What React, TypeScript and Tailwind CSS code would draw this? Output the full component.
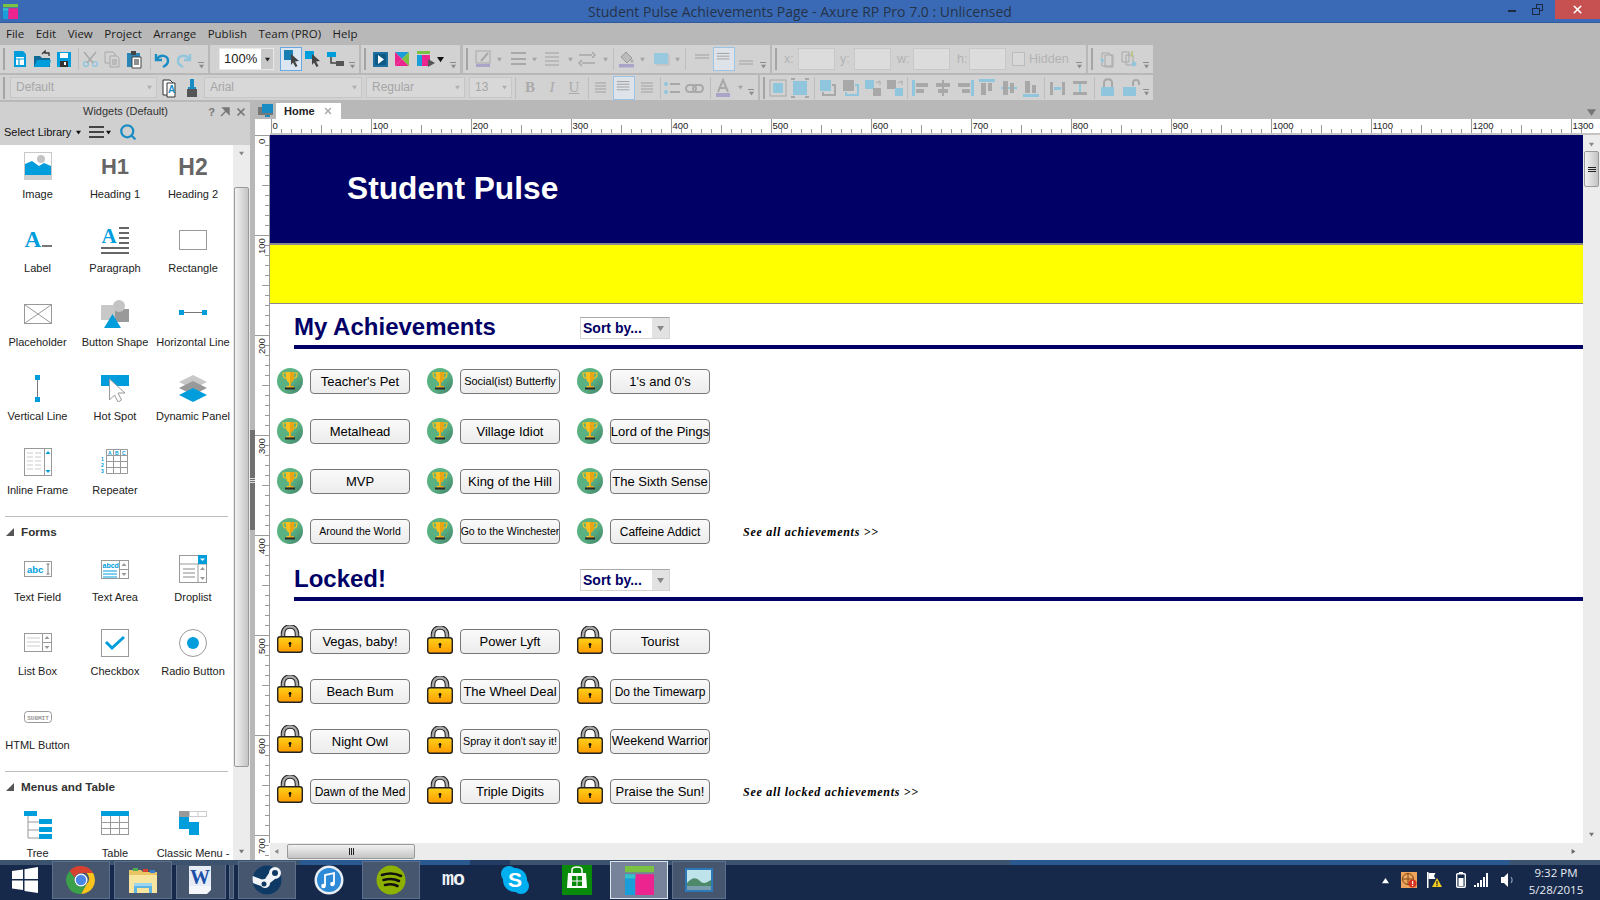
import React from 'react';
import { Search, X } from 'lucide-react';

const BLUE = '#009ddc';
const GREY = '#999999';

function Tri({ dir = 'down', size = 3, color = '#333' }: { dir?: 'down' | 'up' | 'left' | 'right'; size?: number; color?: string }) {
  const pts = {
    down: '0,1 8,1 4,7',
    up: '0,7 8,7 4,1',
    left: '7,0 7,8 1,4',
    right: '1,0 1,8 7,4',
  }[dir];
  return (
    <svg width={size * 2 + 1} height={size * 2 + 1} viewBox="0 0 8 8" className="block shrink-0">
      <polygon points={pts} fill={color} />
    </svg>
  );
}

function Ic({ children, size = 22, vb = 22, className = '' }: { children: React.ReactNode; size?: number; vb?: number; className?: string }) {
  return (
    <svg width={size} height={size} viewBox={`0 0 ${vb} ${vb}`} className={`block shrink-0 ${className}`}>
      {children}
    </svg>
  );
}

function AxureLogo({ size = 28 }: { size?: number }) {
  return (
    <Ic size={size} vb={28}>
      <rect x="0" y="0" width="28" height="6" fill="#7cc242" />
      <rect x="0" y="8" width="10" height="20" fill="#1a9ed9" />
      <rect x="10" y="8" width="18" height="20" fill="#ec2490" />
      <rect x="0" y="8" width="10" height="4" fill="#36c0c8" />
    </Ic>
  );
}

/* ---------- toolbar ---------- */

function Grip() {
  return <div className="ml-[3px] mr-[4px] h-[22px] w-[2px] shrink-0 bg-[#a4a4a4]" />;
}

function End() {
  return (
    <div className="ml-auto mr-[3px] flex w-[8px] flex-col items-center gap-[1px] self-end pb-[4px]">
      <div className="h-px w-[6px] bg-[#8c8c8c]" />
      <Tri size={2} color="#8c8c8c" />
    </div>
  );
}

function Sep({ className = '' }: { className?: string }) {
  return <div className={`h-[22px] w-px shrink-0 bg-[#bdbdbd] ${className}`} />;
}

function Car({ color = '#a4a4a4', className = '' }: { color?: string; className?: string }) {
  return (
    <div className={`flex w-[10px] shrink-0 justify-center ${className}`}>
      <Tri size={2} color={color} />
    </div>
  );
}

function Combo({ label, className = '' }: { label: string; className?: string }) {
  return (
    <div className={`mb-[1px] flex h-[21px] shrink-0 items-center justify-between border border-[#c6c6c6] bg-[#d8d8d8] pl-[5px] pr-[4px] text-[12px] text-[#a6a6a6] ${className}`}>
      <span>{label}</span>
      <Tri size={2} color="#b0b0b0" />
    </div>
  );
}

const Lines = ({ ys, x1 = 4, x2 = 18, c = '#a8a8a8' }: { ys: number[]; x1?: number; x2?: number; c?: string }) => (
  <>
    {ys.map((y) => (
      <line key={y} x1={x1} x2={x2} y1={y} y2={y} stroke={c} strokeWidth="1.2" />
    ))}
  </>
);

const Sq = ({ x, y, w, h, c }: { x: number; y: number; w: number; h: number; c: string }) => <rect x={x} y={y} width={w} height={h} fill={c} />;

const LB = '#8fc6de';
const DG = '#a8a8a8';

function ToolRow1() {
  return (
    <div className="flex h-[28px] text-[#444]">
      <div className="flex h-full w-[208px] items-center bg-[#d2d2d2]">
        <Grip />
        <Ic><path d="M5 3h9l3 3v13H5z" fill={BLUE} /><path d="M7 9h8v8H7z" fill="#fff" /><path d="M7 11h8M10 11v6" stroke={BLUE} strokeWidth="1.2" /></Ic>
        <Ic><path d="M3 8h6l2 2h8v9H3z" fill="#0f6a96" /><path d="M11 6l3-3v2h4v3" stroke="#333" strokeWidth="1.3" fill="none" /><path d="M3 19l3-7h14l-2 7z" fill={BLUE} /></Ic>
        <Ic><path d="M4 4h14v15H4z" fill={BLUE} /><rect x="7" y="5" width="8" height="5" fill="#fff" /><rect x="7" y="13" width="8" height="6" fill="#333" /><rect x="11" y="14" width="2" height="3" fill="#fff" /></Ic>
        <Sep className="ml-[3px]" />
        <Ic><circle cx="7" cy="16" r="2.4" fill="none" stroke={LB} strokeWidth="1.4" /><circle cx="16" cy="16" r="2.4" fill="none" stroke={LB} strokeWidth="1.4" /><path d="M5 4l9 11M17 4L8 15" stroke={DG} strokeWidth="1.5" /></Ic>
        <Ic><path d="M4 4h8l2 2v9H4z" fill="none" stroke={DG} /><path d="M9 8h7l2 2v9H9z" fill="#d2d2d2" stroke={DG} /><Lines ys={[12, 14, 16]} x1={11} x2={16} /></Ic>
        <Ic><path d="M4 5h13v14H4z" fill="#2c86b5" /><rect x="8" y="3" width="5" height="4" fill="#444" /><path d="M9 9h9v11H9z" fill="#fff" stroke="#444" /><Lines ys={[12, 14, 16]} x1={11} x2={16} c="#444" /></Ic>
        <Sep className="ml-[5px]" />
        <Ic><path d="M5 6v6h6" fill="none" stroke="#1a8cc4" strokeWidth="2.4" /><path d="M6 11c3-5 11-4 11 2 0 3-3 5-5 6" fill="none" stroke="#1a8cc4" strokeWidth="2.4" /></Ic>
        <Ic><path d="M17 6v6h-6" fill="none" stroke={LB} strokeWidth="2.4" /><path d="M16 11c-3-5-11-4-11 2 0 3 3 5 5 6" fill="none" stroke={LB} strokeWidth="2.4" /></Ic>
        <End />
      </div>
      <div className="ml-[2px] flex h-full w-[149px] items-center bg-[#d2d2d2]">
        <div className="ml-[9px] flex h-[22px] w-[55px] shrink-0 items-center border border-[#e8e8e8] bg-white pl-[4px] text-[13px] text-[#222]">
          <span className="flex-1">100%</span>
          <div className="flex h-full w-[12px] items-center justify-center bg-[#c8c8c8]"><Tri size={2} color="#222" /></div>
        </div>
        <div className="ml-[6px] h-[24px] w-[22px] shrink-0 border border-[#6aa9e0] bg-[#dbe6f0]">
          <Ic size={22}><rect x="3" y="2" width="9" height="10" fill="#1a7fb0" /><path d="M10 6l8 7-4 .5 2.5 4.5-2 1-2.5-4.5-2 2.5z" fill="#444" /></Ic>
        </div>
        <Ic><rect x="3" y="3" width="9" height="8" fill={BLUE} /><path d="M10 6l8 7-4 .5 2.5 4.5-2 1-2.5-4.5-2 2.5z" fill="#444" /></Ic>
        <Ic><rect x="3" y="4" width="9" height="5" fill={BLUE} /><path d="M7 9v6h6" fill="none" stroke="#444" strokeWidth="1.5" /><rect x="12" y="13" width="8" height="5" fill="#555" /></Ic>
        <End />
      </div>
      <div className="ml-[2px] flex h-full w-[99px] items-center bg-[#d2d2d2]">
        <Grip />
        <Ic className="ml-[-1px]"><rect x="4" y="4" width="15" height="15" fill="#1c6f9e" /><rect x="6" y="6" width="11" height="11" fill="#0f5a85" /><polygon points="9,7 15,11.5 9,16" fill="#fff" /></Ic>
        <Ic><polygon points="4,4 18,4 11,11" fill="#1a9ed9" /><polygon points="4,18 11,11 4,4" fill="#ec2490" /><polygon points="4,18 18,18 11,11" fill="#ec2490" /><polygon points="18,4 18,18 11,11" fill="#7cc242" /></Ic>
        <div className="ml-[2px]"><Ic><rect x="2" y="3" width="13" height="3" fill="#7cc242" /><rect x="2" y="7" width="5" height="11" fill="#1a9ed9" /><rect x="7" y="7" width="8" height="11" fill="#ec2490" /><polygon points="13,11 20,15 13,19" fill="#555" /></Ic></div>
        <Tri size={3} color="#111" />
        <End />
      </div>
      <div className="ml-[3px] flex h-full w-[307px] items-center bg-[#d2d2d2]">
        <Grip />
        <Ic><rect x="4" y="3" width="14" height="12" fill="none" stroke={DG} /><path d="M9 13l7-8" stroke={DG} strokeWidth="2" /><rect x="4" y="16" width="14" height="3" fill="#a9a5c9" /></Ic>
        <Car />
        <Ic className="ml-[3px]"><rect x="4" y="4" width="15" height="2" fill={DG} /><rect x="4" y="10" width="15" height="2" fill={DG} /><rect x="4" y="15" width="15" height="2" fill={DG} /></Ic>
        <Car />
        <Ic className="ml-[2px]"><Lines ys={[5, 9, 13, 17]} /></Ic>
        <Car className="ml-[2px]" />
        <Ic className="ml-[1px]"><path d="M3 7h13M16 4l3 3-3 3M19 15H6M6 12l-3 3 3 3" fill="none" stroke={DG} strokeWidth="1.5" /></Ic>
        <Car className="ml-[2px]" />
        <Sep className="ml-[3px]" />
        <Ic className="ml-[1px]"><path d="M6 9l5-5 6 6-5 5z" fill="#bbb" stroke="#999" /><circle cx="17" cy="13" r="1.5" fill={DG} /><rect x="4" y="16" width="15" height="3.5" fill="#a9a5c9" /></Ic>
        <Car />
        <Ic className="ml-[3px]"><rect x="4" y="5" width="14" height="11" fill="#98c9de" /><path d="M18 7h1v10H6v-1" fill="none" stroke="#bbb" /></Ic>
        <Car />
        <Sep className="ml-[3px]" />
        <Ic className="ml-[5px]"><Lines ys={[7, 10]} /></Ic>
        <div className="h-[24px] w-[22px] shrink-0 border border-[#9cc4e4] bg-[#dde3e8]"><Ic size={20}><Lines ys={[6, 9, 12]} x1={3} x2={17} /></Ic></div>
        <Ic><Lines ys={[13, 16]} /></Ic>
        <End />
      </div>
      <div className="ml-[2px] flex h-full w-[314px] items-center bg-[#d2d2d2] text-[12.5px] text-[#b2b2b2]">
        <Grip />
        <span className="ml-[3px] w-[14px]">x:</span>
        <div className="h-[22px] w-[37px] shrink-0 border border-[#c8c8c8] bg-[#dcdcdc]" />
        <span className="ml-[5px] w-[14px]">y:</span>
        <div className="h-[22px] w-[37px] shrink-0 border border-[#c8c8c8] bg-[#dcdcdc]" />
        <span className="ml-[6px] w-[16px]">w:</span>
        <div className="h-[22px] w-[37px] shrink-0 border border-[#c8c8c8] bg-[#dcdcdc]" />
        <span className="ml-[7px] w-[12px]">h:</span>
        <div className="h-[22px] w-[37px] shrink-0 border border-[#c8c8c8] bg-[#dcdcdc]" />
        <div className="ml-[6px] h-[14px] w-[13px] shrink-0 border border-[#bcbcbc] bg-[#d8d8d8]" />
        <span className="ml-[4px]">Hidden</span>
        <End />
      </div>
      <div className="ml-[2px] flex h-full w-[65px] items-center bg-[#d2d2d2]">
        <Grip />
        <Ic><path d="M5 5h7l3 3v10H5z" fill="none" stroke={DG} /><path d="M8 7h8v12H8z" fill="none" stroke={DG} /><path d="M3 10l5 2-3 3z" fill={LB} /></Ic>
        <Ic><path d="M3 4h7v10H3z" fill="none" stroke={DG} /><path d="M7 7h7v10H7z" fill="none" stroke={DG} /><path d="M13 3v6" stroke="#b8c88a" strokeWidth="2" /><polygon points="15,13 18,16 15,19 12,16" fill={LB} /></Ic>
        <End />
      </div>
    </div>
  );
}

const Big = ({ ch, className = '' }: { ch: string; className?: string }) => (
  <div className={`flex w-[22px] shrink-0 items-center justify-center text-[15px] text-[#aaaaaa] ${className}`} style={{ fontFamily: '"Liberation Serif", serif' }}>
    {ch}
  </div>
);

const AlignIcon = ({ kind }: { kind: number }) => {
  if (kind === 0)
    return <Ic><Sq x={2} y={3} w={3} h={16} c={LB} /><Sq x={6} y={6} w={12} h={4} c={DG} /><Sq x={6} y={12} w={8} h={4} c={DG} /></Ic>;
  if (kind === 1)
    return <Ic><Sq x={10} y={3} w={2} h={16} c={DG} /><Sq x={4} y={6} w={14} h={4} c={DG} /><Sq x={6} y={12} w={10} h={4} c={DG} /></Ic>;
  if (kind === 2)
    return <Ic><Sq x={17} y={3} w={3} h={16} c={LB} /><Sq x={4} y={6} w={12} h={4} c={DG} /><Sq x={8} y={12} w={8} h={4} c={DG} /></Ic>;
  if (kind === 3)
    return <Ic><Sq x={3} y={2} w={16} h={3} c={LB} /><Sq x={5} y={6} w={5} h={12} c={DG} /><Sq x={12} y={6} w={4} h={8} c={DG} /></Ic>;
  if (kind === 4)
    return <Ic><Sq x={3} y={10} w={16} h={2} c={LB} /><Sq x={5} y={4} w={5} h={14} c={DG} /><Sq x={12} y={6} w={4} h={10} c={DG} /></Ic>;
  return <Ic><Sq x={3} y={17} w={16} h={3} c={LB} /><Sq x={5} y={4} w={5} h={12} c={DG} /><Sq x={12} y={8} w={4} h={8} c={DG} /></Ic>;
};

const Lock2 = ({ open }: { open?: boolean }) => (
  <Ic>
    <path d={open ? 'M14 9V6c0-4 6-4 6 0v2' : 'M7 10V6c0-5 8-5 8 0v4'} fill="none" stroke={DG} strokeWidth="2" />
    <rect x="4" y="10" width="13" height="9" fill={LB} />
  </Ic>
);

function ToolRow2() {
  return (
    <div className="mt-[2px] flex h-[25px]">
      <div className="flex h-full w-[758px] items-center bg-[#d2d2d2]">
        <Grip />
        <Combo label="Default" className="ml-px w-[147px]" />
        <Ic className="ml-[2px]"><path d="M4 3h7l3 3v12H4z" fill="#fff" stroke="#333" /><path d="M8 6h8v14H8z" fill="#fff" stroke="#333" /><text x="9" y="16" fontSize="10" fontWeight="bold" fill="#1a8cc4" fontFamily="Liberation Sans">A</text></Ic>
        <Ic><rect x="9" y="2" width="4" height="8" fill="#1a8cc4" /><path d="M7 10h8v2H7z" fill="#1a8cc4" /><path d="M6 12h10v8H6z" fill="#555" /></Ic>
        <Combo label="Arial" className="ml-[1px] w-[158px]" />
        <Combo label="Regular" className="ml-[4px] w-[99px]" />
        <Combo label="13" className="ml-[4px] w-[43px]" />
        <Sep className="ml-[3px]" />
        <Big ch="B" className="ml-[3px] font-bold" />
        <Big ch="I" className="italic" />
        <Big ch="U" className="underline" />
        <Sep className="ml-[3px]" />
        <Ic className="ml-[2px]"><Lines ys={[6, 9, 12, 15]} x2={15} /></Ic>
        <div className="h-[24px] w-[22px] shrink-0 border border-[#9cc4e4] bg-[#dde3e8]"><Ic size={20}><Lines ys={[5, 8, 11, 14]} x1={3} x2={17} /></Ic></div>
        <Ic><Lines ys={[6, 9, 12, 15]} x1={6} /></Ic>
        <Sep className="ml-[3px]" />
        <Ic><circle cx="5" cy="7" r="2" fill={LB} /><circle cx="5" cy="15" r="2" fill={LB} /><rect x="9" y="6" width="10" height="2" fill={DG} /><rect x="9" y="14" width="10" height="2" fill={DG} /></Ic>
        <Ic className="ml-[1px]"><rect x="2" y="8" width="10" height="7" rx="3.5" fill="none" stroke={DG} strokeWidth="2" /><rect x="9" y="8" width="10" height="7" rx="3.5" fill="none" stroke={DG} strokeWidth="2" /></Ic>
        <Sep className="ml-[4px]" />
        <Ic className="ml-[1px]"><path d="M6 15L11 3l5 12M8 11h6" fill="none" stroke={DG} strokeWidth="2" /><rect x="4" y="16" width="14" height="4" fill="#a9a5c9" /></Ic>
        <Car className="ml-[1px]" />
        <End />
      </div>
      <div className="ml-[2px] flex h-full w-[393px] items-center bg-[#d2d2d2]">
        <Grip />
        <Ic className="ml-[-2px]"><rect x="3" y="3" width="16" height="16" fill="none" stroke={DG} /><rect x="6" y="6" width="10" height="10" fill="#8fc6de" /></Ic>
        <Ic><rect x="4" y="4" width="14" height="14" fill="#8fc6de" /><path d="M2 2h4M16 2h4M2 20h4M16 20h4" stroke={DG} strokeWidth="2" /></Ic>
        <Sep className="ml-[3px]" />
        <Ic className="ml-[2px]"><rect x="3" y="3" width="11" height="11" fill={LB} /><path d="M6 15v3h12V8h-3" fill="none" stroke={DG} strokeWidth="2" /></Ic>
        <Ic className="ml-px"><rect x="3" y="3" width="11" height="11" fill={DG} /><path d="M6 15v3h12V8h-3" fill="none" stroke={LB} strokeWidth="2" /></Ic>
        <Ic><rect x="3" y="3" width="9" height="9" fill={LB} /><rect x="11" y="11" width="8" height="8" fill={DG} /><path d="M14 6l4-2v4" fill="none" stroke={DG} /></Ic>
        <Ic><rect x="3" y="3" width="9" height="9" fill={DG} /><rect x="11" y="11" width="8" height="8" fill={LB} /><path d="M14 6l4-2v4" fill="none" stroke={DG} /></Ic>
        <Sep className="ml-[1px]" />
        <div className="ml-[2px]"><AlignIcon kind={0} /></div>
        <AlignIcon kind={1} />
        <AlignIcon kind={2} />
        <AlignIcon kind={3} />
        <AlignIcon kind={4} />
        <AlignIcon kind={5} />
        <Sep className="ml-[2px]" />
        <Ic className="ml-[2px]"><Sq x={3} y={5} w={3} h={13} c={DG} /><Sq x={15} y={5} w={3} h={13} c={DG} /><Sq x={7} y={10} w={7} h={3} c={LB} /></Ic>
        <Ic><Sq x={4} y={4} w={14} h={3} c={DG} /><Sq x={4} y={15} w={14} h={3} c={DG} /><Sq x={10} y={7} w={2} h={8} c={LB} /></Ic>
        <Sep className="ml-[3px]" />
        <div className="ml-[2px]"><Lock2 /></div>
        <Lock2 open />
        <End />
      </div>
    </div>
  );
}

/* ---------- widgets ---------- */

const W = ({ children }: { children: React.ReactNode }) => <Ic size={28} vb={28}>{children}</Ic>;
const G = GREY;

const widgetIcons: Record<string, React.ReactNode> = {
  Image: <W><rect x="0.5" y="0.5" width="27" height="27" fill="#fff" stroke="#c8c8c8" /><circle cx="17" cy="7" r="4" fill="#c4c4c4" /><path d="M1 12l7-3 7 5 5-3 7 3v9H1z" fill={BLUE} /><rect x="0" y="23" width="28" height="5" fill="#cfcfcf" /></W>,
  'Heading 1': <W><text x="14" y="22" textAnchor="middle" fontSize="22" fontWeight="bold" fill="#666" fontFamily="Liberation Sans">H1</text></W>,
  'Heading 2': <W><text x="14" y="23" textAnchor="middle" fontSize="23" fontWeight="bold" fill="#666" fontFamily="Liberation Sans">H2</text></W>,
  Label: <W><text x="0.5" y="21" fontSize="23" fontWeight="bold" fill={BLUE} fontFamily="Liberation Serif">A</text><rect x="18" y="19" width="10" height="2" fill="#777" /></W>,
  Paragraph: <W><text x="0.5" y="17" fontSize="21" fontWeight="bold" fill={BLUE} fontFamily="Liberation Serif">A</text><rect x="18" y="1" width="10" height="2" fill="#666" /><rect x="18" y="6" width="10" height="2" fill="#666" /><rect x="18" y="11" width="10" height="2" fill="#666" /><rect x="18" y="16" width="10" height="2" fill="#666" /><rect x="0" y="21" width="28" height="2" fill="#666" /><rect x="0" y="26" width="28" height="2" fill="#666" /></W>,
  Rectangle: <W><rect x="0.5" y="4.5" width="27" height="19" fill="#fff" stroke={G} /></W>,
  Placeholder: <W><rect x="0.5" y="4.5" width="27" height="19" fill="#fff" stroke={G} /><path d="M1 5l26 18M27 5L1 23" stroke={G} /></W>,
  'Button Shape': <W><rect x="0" y="5" width="14" height="15" fill="#c8c8c8" /><rect x="14" y="9" width="14" height="13" fill="#999" /><circle cx="18" cy="6" r="6" fill="#c4c4c4" /><polygon points="3,28 20,28 11.5,14" fill={BLUE} /></W>,
  'Horizontal Line': <W><rect x="0" y="10" width="5" height="5" fill={BLUE} /><rect x="23" y="10" width="5" height="5" fill={BLUE} /><rect x="5" y="12" width="18" height="1" fill="#777" /></W>,
  'Vertical Line': <W><rect x="11" y="1" width="5" height="5" fill={BLUE} /><rect x="11" y="23" width="5" height="5" fill={BLUE} /><rect x="13" y="6" width="1" height="17" fill="#777" /></W>,
  'Hot Spot': <W><rect x="0" y="1" width="28" height="11" fill={BLUE} /><path d="M8.5 5v21l5-5 3.5 7 3.5-2-3.5-7h7z" fill="#fff" stroke="#999" /></W>,
  'Dynamic Panel': <W><polygon points="14,1 28,8 14,15 0,8" fill="#c8c8c8" /><polygon points="14,7 28,14 14,21 0,14" fill="#999" /><polygon points="14,14 28,21 14,28 0,21" fill={BLUE} /></W>,
  'Inline Frame': <W><rect x="0.5" y="0.5" width="27" height="27" fill="#fff" stroke={G} /><rect x="20" y="1" width="1" height="26" fill={G} /><polygon points="24,3 21.5,6 26.5,6" fill={BLUE} /><polygon points="24,25 21.5,22 26.5,22" fill={BLUE} /><path d="M3 5h6M11 5h6M3 9h6M11 9h6M3 13h6M11 13h6M3 17h6M11 17h6M3 21h6M11 21h6" stroke="#ccc" /></W>,
  Repeater: <W><path d="M5.5 1.5h21v24h-21zM5.5 7.5h21M5.5 13.5h21M5.5 19.5h21M12.5 1.5v24M19.5 1.5v24" fill="none" stroke={G} /><text x="7" y="6.5" fontSize="5" fontWeight="bold" fill={BLUE} fontFamily="Liberation Sans">A</text><text x="14" y="6.5" fontSize="5" fontWeight="bold" fill={BLUE} fontFamily="Liberation Sans">B</text><text x="21" y="6.5" fontSize="5" fontWeight="bold" fill={BLUE} fontFamily="Liberation Sans">C</text><text x="0" y="13" fontSize="5" fontWeight="bold" fill={BLUE} fontFamily="Liberation Sans">1</text><text x="0" y="19" fontSize="5" fontWeight="bold" fill={BLUE} fontFamily="Liberation Sans">2</text><text x="0" y="25" fontSize="5" fontWeight="bold" fill={BLUE} fontFamily="Liberation Sans">3</text></W>,
  'Text Field': <W><rect x="0.5" y="6.5" width="27" height="15" fill="#fff" stroke={G} /><text x="3" y="18" fontSize="9.5" fontWeight="bold" fill={BLUE} fontFamily="Liberation Sans">abc</text><path d="M24 9v10M22.5 9h3M22.5 19h3" stroke="#777" /></W>,
  'Text Area': <W><rect x="0.5" y="5.5" width="27" height="18" fill="#fff" stroke={G} /><rect x="18" y="6" width="1" height="18" fill={G} /><text x="1.5" y="13" fontSize="7" fontWeight="bold" fill={BLUE} fontFamily="Liberation Sans">abcd</text><path d="M2 16h14M2 19h14M2 22h14" stroke={BLUE} /><polygon points="23,8 20.5,11 25.5,11" fill={G} /><polygon points="23,21 20.5,18 25.5,18" fill={G} /><path d="M19 14.5h8" stroke={G} /></W>,
  Droplist: <W><rect x="0.5" y="0.5" width="27" height="27" fill="#fff" stroke={G} /><path d="M1 9h26M19 9v18" stroke={G} /><rect x="19" y="0" width="9" height="9" fill={BLUE} /><polygon points="21,3.5 26,3.5 23.5,6" fill="#fff" /><path d="M4 14h12M4 18h12M4 22h12" stroke="#888" /><polygon points="23.5,12 21,15 26,15" fill={G} /><polygon points="23.5,25 21,22 26,22" fill={G} /></W>,
  'List Box': <W><rect x="0.5" y="4.5" width="27" height="18" fill="#fff" stroke={G} /><rect x="18" y="5" width="1" height="18" fill={G} /><path d="M3 9h13M3 13h13M3 17h13" stroke="#ccc" /><polygon points="23,7 20.5,10 25.5,10" fill={G} /><polygon points="23,20 20.5,17 25.5,17" fill={G} /><path d="M19 13.5h8" stroke={G} /></W>,
  Checkbox: <W><rect x="0.5" y="0.5" width="27" height="27" fill="#fff" stroke={G} /><path d="M5 13l6 6L23 8" fill="none" stroke={BLUE} strokeWidth="3" /></W>,
  'Radio Button': <W><circle cx="14" cy="14" r="13.5" fill="#fff" stroke={G} /><circle cx="14" cy="14" r="6" fill={BLUE} /></W>,
  'HTML Button': <W><rect x="0.5" y="8.5" width="27" height="11" rx="3" fill="#fff" stroke={G} /><text x="14" y="16.5" textAnchor="middle" fontSize="6" fontWeight="bold" fill="#999" fontFamily="Liberation Mono">SUBMIT</text></W>,
  Tree: <W><rect x="0" y="0" width="13" height="5" fill={BLUE} /><path d="M4 5v22h11M4 11h11M4 19h11" fill="none" stroke={G} /><rect x="15" y="8" width="13" height="5" fill={BLUE} /><rect x="15" y="16" width="13" height="5" fill={BLUE} /><rect x="15" y="23" width="13" height="5" fill={BLUE} /></W>,
  Table: <W><rect x="0.5" y="0.5" width="27" height="23" fill="#fff" stroke={G} /><rect x="0" y="0" width="28" height="5" fill={BLUE} /><path d="M1 11.5h26M1 17.5h26M9.5 5v19M18.5 5v19" stroke={G} /></W>,
  'Classic Menu -': <W><rect x="0" y="0" width="10" height="6" fill="#999" /><rect x="10.5" y="0.5" width="17" height="5" fill="#fff" stroke="#ccc" /><path d="M19 0v6" stroke="#ccc" /><rect x="0" y="6" width="10" height="12" fill={BLUE} /><rect x="10" y="11" width="10" height="13" fill={BLUE} /></W>,
};

function WidgetGrid({ names, className = '' }: { names: string[]; className?: string }) {
  return (
    <div className={`grid grid-cols-[75px_80px_76px] auto-rows-[74px] ${className}`}>
      {names.map((n) => (
        <div key={n} className="flex flex-col items-center">
          {widgetIcons[n]}
          <span className="mt-[8px] whitespace-nowrap text-[11px] leading-[13px] text-[#222]">{n}</span>
        </div>
      ))}
    </div>
  );
}

function SectionHead({ title }: { title: string }) {
  return (
    <div className="mx-[5px] flex h-[30px] items-center gap-[7px] border-t border-[#bdbdbd] pl-px">
      <svg width="8" height="8" viewBox="0 0 8 8" className="block"><polygon points="8,0 8,8 0,8" fill="#555" /></svg>
      <span className="text-[11.7px] font-bold text-[#333]">{title}</span>
    </div>
  );
}

function WidgetPanel() {
  return (
    <div className="flex w-[250px] shrink-0 flex-col">
      <div className="h-[43px] shrink-0 bg-[#d0d0d0]">
        <div className="relative flex h-[18px] items-center justify-center text-[11px] text-[#333]">
          <span className="pl-[1px]">Widgets (Default)</span>
          <div className="absolute right-[3px] top-[2px] flex items-center gap-[5px] text-[11px] font-bold text-[#777]">
            <span>?</span>
            <svg width="10" height="10" viewBox="0 0 10 10"><path d="M1 9l5-5M3 1h6v6z" fill="#777" stroke="#777" strokeWidth="1.4" /></svg>
            <X size={12} strokeWidth={3.5} color="#777" />
          </div>
        </div>
        <div className="mt-[2px] flex h-[20px] items-center pl-[4px] text-[11px] text-[#111]">
          <span>Select Library</span>
          <span className="ml-[5px]"><Tri size={2} color="#111" /></span>
          <div className="ml-[8px] flex w-[15px] flex-col gap-[3px]">
            <div className="h-[2px] bg-[#444]" />
            <div className="h-[2px] bg-[#444]" />
            <div className="h-[2px] bg-[#444]" />
          </div>
          <span className="ml-[2px]"><Tri size={2} color="#111" /></span>
          <Search size={18} strokeWidth={3} color="#1a8cc4" className="ml-[8px]" />
        </div>
      </div>
      <div className="flex min-h-0 flex-1">
        <div className="min-w-0 flex-1 overflow-hidden bg-white">
          <WidgetGrid className="h-[371px] pt-[7px]" names={['Image', 'Heading 1', 'Heading 2', 'Label', 'Paragraph', 'Rectangle', 'Placeholder', 'Button Shape', 'Horizontal Line', 'Vertical Line', 'Hot Spot', 'Dynamic Panel', 'Inline Frame', 'Repeater']} />
          <SectionHead title="Forms" />
          <WidgetGrid className="h-[225px] pt-[9px]" names={['Text Field', 'Text Area', 'Droplist', 'List Box', 'Checkbox', 'Radio Button', 'HTML Button']} />
          <SectionHead title="Menus and Table" />
          <WidgetGrid className="pt-[10px]" names={['Tree', 'Table', 'Classic Menu -']} />
        </div>
        <div className="flex w-[17px] shrink-0 flex-col items-center bg-[#ececec]">
          <div className="flex h-[11px] items-end"><Tri size={2} color="#888" /></div>
          <div className="mt-[31px] h-[580px] w-[15px] rounded-[2px] border border-[#999] bg-gradient-to-r from-[#f2f2f2] to-[#c4c4c4]" />
          <div className="mt-auto pb-[6px]"><Tri size={2} color="#777" /></div>
        </div>
      </div>
    </div>
  );
}

function Splitter() {
  return (
    <div className="flex w-[5px] shrink-0 flex-col bg-[#b8b8b8]">
      <div className="h-[328px] shrink-0" />
      <div className="flex h-[100px] shrink-0 flex-col items-center justify-center gap-[1px] bg-[#707070]">
        <div className="h-px w-full bg-[#ddd]" />
        <div className="h-px w-full bg-[#ddd]" />
        <div className="h-px w-full bg-[#ddd]" />
      </div>
    </div>
  );
}

/* ---------- rulers ---------- */

function HRuler() {
  const ticks = [];
  for (let i = 0; i <= 1310; i += 10) {
    const x = i + 1.5;
    const top = i % 100 === 0 ? 0 : i % 50 === 0 ? 6 : 10;
    ticks.push(<line key={i} x1={x} x2={x} y1={top} y2={14} stroke="#9a9a9a" />);
  }
  const labels = [];
  for (let i = 0; i <= 1300; i += 100) {
    labels.push(
      <text key={i} x={i + 2.5} y={10} fontSize="9.5" fill="#222" fontFamily="Liberation Sans">{i}</text>
    );
  }
  return (
    <svg width="1330" height="16" className="block">
      <rect width="1330" height="14" fill="#fff" />
      {ticks}
      {labels}
      <rect y="14" width="1330" height="2" fill="#c4c4c4" />
    </svg>
  );
}

function VRuler() {
  const ticks = [];
  for (let i = 0; i <= 720; i += 10) {
    const y = i + 0.5;
    const left = i % 100 === 0 ? 0 : i % 50 === 0 ? 7 : 10;
    ticks.push(<line key={i} x1={left} x2={14} y1={y} y2={y} stroke="#9a9a9a" />);
  }
  const labels = [];
  for (let i = 0; i <= 700; i += 100) {
    labels.push(
      <text key={i} transform={`translate(10 ${i + 4 + String(i).length * 5}) rotate(-90)`} fontSize="9.5" fill="#222" fontFamily="Liberation Sans">{i}</text>
    );
  }
  return (
    <svg width="15" height="725" className="block shrink-0">
      <rect width="15" height="725" fill="#fff" />
      {ticks}
      {labels}
      <rect x="14" width="1" height="708" fill="#999" />
    </svg>
  );
}

/* ---------- page on the canvas ---------- */

function Trophy() {
  return (
    <svg width="26" height="26" viewBox="0 0 26 26" className="block shrink-0">
      <defs>
        <linearGradient id="tr" x1="0" y1="0" x2="1" y2="1">
          <stop offset="0.55" stopColor="#5ab283" />
          <stop offset="1" stopColor="#3f7d68" />
        </linearGradient>
      </defs>
      <circle cx="13" cy="13" r="13" fill="url(#tr)" />
      <path d="M6 5h3.500v5H8.500C7 10 6 8 6 5zM20 5h-3.500v5h1C19 10 20 8 20 5z" fill="none" stroke="#f8c31c" strokeWidth="1.2" />
      <path d="M9 4h8v5c0 3.500-2 5-3 5.500V18h2.500v1.500h-7V18H12v-3.500C11 14 9 12.500 9 9z" fill="#fbc01d" />
      <path d="M13 4h4v5c0 3.500-2 5-3 5.500V18h2.500v1.500H13z" fill="#e9a414" />
      <rect x="8" y="19.500" width="10" height="2" fill="#2b2b2b" />
    </svg>
  );
}

function Padlock({ tall }: { tall?: boolean }) {
  return (
    <svg width="26" height="28" viewBox="0 0 26 28" className={`block shrink-0 ${tall ? '-translate-y-[1px]' : ''}`}>
      <defs>
        <linearGradient id="lk" x1="0" y1="0" x2="0" y2="1">
          <stop offset="0" stopColor="#ffd21a" />
          <stop offset="1" stopColor="#fd9a00" />
        </linearGradient>
      </defs>
      <path d="M6 13V9c0-10 14-10 14 0v4" fill="none" stroke="#222" strokeWidth="4.600" />
      <path d="M6 13V9c0-10 14-10 14 0v4" fill="none" stroke="#a8a8a8" strokeWidth="2.600" />
      <rect x="0.700" y="11.700" width="24.600" height="15.600" rx="2.500" fill="url(#lk)" stroke="#222" strokeWidth="1.400" />
      <circle cx="13" cy="18.500" r="1.400" fill="#111" />
      <rect x="12.300" y="19" width="1.400" height="3" fill="#111" />
    </svg>
  );
}

type Item = { t: string; c: string };

function Pill({ t, c }: Item) {
  return (
    <div className={`flex h-[25px] w-[100px] shrink-0 items-center justify-center overflow-hidden whitespace-nowrap rounded-[4px] border border-[#777] bg-gradient-to-b from-[#fafafa] to-[#ececec] text-black ${c}`}>
      {t}
    </div>
  );
}

function AchRow({ items, icon, link }: { items: Item[]; icon: (i: number) => React.ReactNode; link?: string }) {
  return (
    <div className="flex h-[50px] pl-[7px] pt-[4px]">
      {items.map((it, i) => (
        <div key={it.t} className="flex h-[25px] w-[150px] shrink-0 gap-[7px]">
          <div className="flex h-[25px] w-[26px] shrink-0 items-end justify-center">{icon(i)}</div>
          <Pill {...it} />
        </div>
      ))}
      {link && (
        <div className="ml-[16px] pt-[4px] text-[12px] font-bold italic tracking-[0.72px] text-black" style={{ fontFamily: '"Liberation Serif", serif' }}>
          {link}
        </div>
      )}
    </div>
  );
}

function SectionTop({ title }: { title: string }) {
  return (
    <div className="ml-[24px] border-b-[4px] border-[#000066] pb-[6px]">
      <div className="flex h-[22px] items-center">
        <h2 className="w-[286px] shrink-0 pb-[2px] text-[24px] font-bold leading-none text-[#000066]">{title}</h2>
        <div className="flex h-[22px] w-[90px] items-stretch border border-[#d4d4d4] border-t-[#a8a8a8] bg-white">
          <span className="flex-1 pl-[2px] text-[14px] font-bold leading-[20px] text-[#000066]">Sort by...</span>
          <div className="flex w-[17px] items-center justify-center bg-[#e2e2e2]"><Tri size={3} color="#888" /></div>
        </div>
      </div>
    </div>
  );
}

const got: Item[][] = [
  [{ t: "Teacher's Pet", c: 'text-[13px]' }, { t: 'Social(ist) Butterfly', c: 'text-[11px]' }, { t: "1's and 0's", c: 'text-[13px]' }],
  [{ t: 'Metalhead', c: 'text-[13px]' }, { t: 'Village Idiot', c: 'text-[13px]' }, { t: 'Lord of the Pings', c: 'text-[13px]' }],
  [{ t: 'MVP', c: 'text-[13px]' }, { t: 'King of the Hill', c: 'text-[13px]' }, { t: 'The Sixth Sense', c: 'text-[13px]' }],
  [{ t: 'Around the World', c: 'text-[10.5px]' }, { t: 'Go to the Winchester', c: 'text-[10.5px]' }, { t: 'Caffeine Addict', c: 'text-[12px]' }],
];

const locked: Item[][] = [
  [{ t: 'Vegas, baby!', c: 'text-[13px]' }, { t: 'Power Lyft', c: 'text-[13px]' }, { t: 'Tourist', c: 'text-[13px]' }],
  [{ t: 'Beach Bum', c: 'text-[13px]' }, { t: 'The Wheel Deal', c: 'text-[13px]' }, { t: 'Do the Timewarp', c: 'text-[12px]' }],
  [{ t: 'Night Owl', c: 'text-[13px]' }, { t: "Spray it don't say it!", c: 'text-[10.8px]' }, { t: 'Weekend Warrior', c: 'text-[12.500px]' }],
  [{ t: 'Dawn of the Med', c: 'text-[12px]' }, { t: 'Triple Digits', c: 'text-[13px]' }, { t: 'Praise the Sun!', c: 'text-[13px]' }],
];

function PageCanvas() {
  return (
    <div className="h-[708px] overflow-hidden bg-white" style={{ fontFamily: '"Liberation Sans", Arial, sans-serif' }}>
      <div className="flex h-[108px] items-center bg-[#000066] pl-[77px]">
        <h1 className="text-[31.700px] font-bold text-white">Student Pulse</h1>
      </div>
      <div className="h-[61px] border-t-2 border-b border-[#8c8c8c] bg-[#ffff00]" />
      <div className="pt-[13px]">
        <SectionTop title="My Achievements" />
      </div>
      <div className="pt-[16px]">
        {got.map((r, i) => (
          <AchRow key={i} items={r} icon={() => <Trophy />} link={i === 3 ? 'See all achievements >>' : undefined} />
        ))}
      </div>
      <div className="mt-[4px]">
        <SectionTop title="Locked!" />
      </div>
      <div className="pt-[24px]">
        {locked.map((r, i) => (
          <AchRow key={i} items={r} icon={(k) => <Padlock tall={k === 0} />} link={i === 3 ? 'See all locked achievements >>' : undefined} />
        ))}
      </div>
    </div>
  );
}

function CanvasArea() {
  return (
    <div className="flex min-w-0 flex-1 flex-col">
      <div className="flex h-[17px] shrink-0 items-end bg-[#b8b8b8]">
        <div className="flex w-[21px] justify-center pb-[1px]">
          <Ic size={16} vb={16}><rect x="4" y="2" width="11" height="9" fill="#1a8cc4" /><rect x="0" y="5" width="4" height="8" fill="#777" /><rect x="4" y="11" width="11" height="2" fill="#777" /><rect x="7" y="13" width="5" height="2" fill="#1a8cc4" /></Ic>
        </div>
        <div className="flex h-[16px] w-[65px] items-center justify-between bg-white pl-[8px] pr-[8px] text-[11px] font-bold text-[#222]">
          <span>Home</span>
          <X size={10} strokeWidth={3.5} color="#aaa" />
        </div>
        <div className="ml-auto mr-[4px] pb-[2px]"><Tri size={4} color="#777" /></div>
      </div>
      <div className="flex h-[16px] shrink-0 overflow-hidden bg-white">
        <div className="w-[15px] shrink-0 bg-white" />
        <HRuler />
      </div>
      <div className="flex h-[725px] shrink-0">
        <VRuler />
        <div className="flex min-w-0 flex-1 flex-col">
          <div className="flex h-[708px] shrink-0">
            <div className="min-w-0 flex-1">
              <PageCanvas />
            </div>
            <div className="flex w-[17px] shrink-0 flex-col items-center bg-[#ececec]">
              <div className="flex h-[12px] items-end"><Tri size={2} color="#888" /></div>
              <div className="mt-[4px] flex h-[36px] w-[15px] flex-col items-center justify-center gap-[1px] rounded-[2px] border border-[#999] bg-gradient-to-r from-[#f2f2f2] to-[#c4c4c4]">
                <div className="h-px w-[8px] bg-[#222]" />
                <div className="h-px w-[8px] bg-[#222]" />
                <div className="h-px w-[8px] bg-[#222]" />
              </div>
              <div className="mt-auto pb-[6px]"><Tri size={2} color="#777" /></div>
            </div>
          </div>
          <div className="flex h-[17px] shrink-0 items-center bg-[#ececec]">
            <div className="ml-[4px] w-[13px]"><Tri dir="left" size={2} color="#888" /></div>
            <div className="flex h-[15px] w-[128px] items-center justify-center gap-[1px] rounded-[2px] border border-[#999] bg-gradient-to-b from-[#f2f2f2] to-[#c4c4c4]">
              <div className="h-[7px] w-px bg-[#222]" />
              <div className="h-[7px] w-px bg-[#222]" />
              <div className="h-[7px] w-px bg-[#222]" />
            </div>
            <div className="ml-auto mr-[24px]"><Tri dir="right" size={2} color="#666" /></div>
          </div>
        </div>
      </div>
    </div>
  );
}

/* ---------- taskbar ---------- */

function Frame({ children, active, w = 58 }: { children: React.ReactNode; active?: boolean; w?: number }) {
  return (
    <div
      className={`flex h-[38px] items-center justify-center border ${active ? 'border-[#dfe5ec] bg-[#76839a]' : 'border-[#5c6f8c] bg-[#46566f]'}`}
      style={{ width: w }}
    >
      {children}
    </div>
  );
}

function Slot({ children, className = 'w-[62px]' }: { children: React.ReactNode; className?: string }) {
  return <div className={`relative flex h-full shrink-0 items-center justify-center ${className}`}>{children}</div>;
}

const T = ({ children }: { children: React.ReactNode }) => <Ic size={30} vb={30}>{children}</Ic>;

function Taskbar() {
  return (
    <div className="relative flex h-[40px] shrink-0 bg-[#16294a] text-white" style={{ fontFamily: '"Open Sans", sans-serif' }}>
      <div className="absolute inset-x-0 top-0 flex h-[5px]">
        <div className="w-[300px] bg-[#3c5370]" />
        <div className="w-[170px] bg-[#29598f]" />
        <div className="w-[40px] bg-[#223c63]" />
        <div className="w-[500px] bg-[#3c5370]" />
        <div className="w-[500px] bg-[#29598f]" />
        <div className="flex-1 bg-[#3c5370]" />
      </div>
      <Slot className="w-[50px]">
        <svg width="26" height="26" viewBox="0 0 26 26" className="block"><polygon points="0,4 11,2.500 11,12 0,12" fill="#fff" /><polygon points="12.500,2.300 26,0 26,12 12.500,12" fill="#fff" /><polygon points="0,13.500 11,13.500 11,23 0,21.500" fill="#fff" /><polygon points="12.500,13.500 26,13.500 26,26 12.500,24" fill="#fff" /></svg>
      </Slot>
      <Slot>
        <Frame>
          <T>
            <path d="M15 1a14 14 0 0 1 12.100 7H15a7 7 0 0 0-6.500 4.500L3.500 6A14 14 0 0 1 15 1z" fill="#d8412f" />
            <path d="M27.100 8A14 14 0 0 1 15 29l5.500-10a7 7 0 0 0 0-11z" fill="#fbc41c" />
            <path d="M3.500 6A14 14 0 0 0 15 29l5.500-10a7 7 0 0 1-12-6.500z" fill="#3aa04a" />
            <circle cx="15" cy="15" r="6.500" fill="#fff" />
            <circle cx="15" cy="15" r="5.200" fill="#4a86e8" />
          </T>
        </Frame>
      </Slot>
      <Slot>
        <Frame>
          <T>
            <path d="M1 5h12l2 2h14v21H1z" fill="#e9c566" />
            <rect x="5" y="3" width="5" height="3" fill="#4caf50" />
            <rect x="15" y="4" width="5" height="3" fill="#d84030" />
            <rect x="22" y="5" width="5" height="3" fill="#3a80d0" />
            <path d="M1 10h28v18H1z" fill="#f8e6a0" />
            <path d="M6 28v-8h18v8h-3v-5H9v5z" fill="#5fb4e4" />
            <rect x="6" y="18" width="18" height="3" fill="#9ad6f0" />
          </T>
        </Frame>
      </Slot>
      <div className="flex h-full w-[54px] shrink-0 items-center justify-center">
        <Frame w={50}>
          <T>
            <path d="M3 1h22v24l-4 4H3z" fill="#f4f6fa" />
            <rect x="3" y="1" width="22" height="20" fill="#e6ecf6" />
            <text x="14" y="19" textAnchor="middle" fontSize="20" fontWeight="bold" fill="#1b4fa8" fontFamily="Liberation Serif">W</text>
          </T>
        </Frame>
      </div>
      <div className="ml-[1px] flex h-full w-[7px] shrink-0 items-center">
        <Frame w={5}><span /></Frame>
      </div>
      <Slot>
        <Frame>
          <T>
            <circle cx="15" cy="15" r="14.500" fill="#0f3a66" />
            <path d="M1 18l8 3a5 5 0 0 0 9-3l5-4a6 6 0 1 0-6-6l-4 6a5 5 0 0 0-3 .500L.800 11C.400 13 .600 16 1 18z" fill="#f2f4f7" />
            <circle cx="23" cy="8" r="3" fill="#0f3a66" />
            <circle cx="12" cy="19" r="2.500" fill="#0f3a66" />
          </T>
        </Frame>
      </Slot>
      <Slot>
        <T>
          <circle cx="15" cy="15" r="14.500" fill="#e8eef4" />
          <circle cx="15" cy="15" r="12" fill="#2d8ad6" />
          <path d="M11 21V10l9-2v11" fill="none" stroke="#fff" strokeWidth="1.800" />
          <circle cx="9.500" cy="21" r="2.300" fill="#fff" />
          <circle cx="18.500" cy="19" r="2.300" fill="#fff" />
        </T>
      </Slot>
      <Slot>
        <Frame>
          <T>
            <circle cx="15" cy="15" r="14.500" fill="#8cb100" />
            <path d="M6 10c6-2 13-2 19 1M7.500 15c5-1.500 11-1.300 15.500 1M9 20c4-1 9-1 12.500 1" fill="none" stroke="#111" strokeWidth="2.600" strokeLinecap="round" />
          </T>
        </Frame>
      </Slot>
      <Slot>
        <div className="rounded-[2px] text-[20px] font-black leading-none tracking-[-1px] text-[#eef2f6]" style={{ fontFamily: '"Liberation Mono", monospace' }}>mo</div>
      </Slot>
      <Slot>
        <T>
          <circle cx="9" cy="9" r="8" fill="#00aff0" />
          <circle cx="21" cy="21" r="8" fill="#00aff0" />
          <circle cx="15" cy="15" r="12" fill="#00aff0" />
          <text x="15" y="22" textAnchor="middle" fontSize="21" fontWeight="bold" fill="#fff" fontFamily="Liberation Sans">S</text>
        </T>
      </Slot>
      <Slot>
        <T>
          <rect x="0" y="0" width="30" height="30" fill="#0a8a0a" />
          <path d="M10 8V5c0-4 10-4 10 0v3" fill="none" stroke="#fff" strokeWidth="1.500" />
          <path d="M6 8h18l1 15H5z" fill="#fff" />
          <rect x="10" y="11" width="4.500" height="4.500" fill="#0a8a0a" />
          <rect x="15.500" y="11" width="4.500" height="4.500" fill="#0a8a0a" />
          <rect x="10" y="16.500" width="4.500" height="4.500" fill="#0a8a0a" />
          <rect x="15.500" y="16.500" width="4.500" height="4.500" fill="#0a8a0a" />
        </T>
      </Slot>
      <Slot>
        <Frame active>
          <AxureLogo size={29} />
        </Frame>
      </Slot>
      <Slot className="w-[58px]">
        <Frame w={54}>
          <T>
            <rect x="1" y="3" width="28" height="24" fill="#2d79b8" />
            <rect x="3" y="5" width="24" height="20" fill="#bfe3ea" />
            <path d="M3 18c5-6 9-6 13-2s7 1 11-1v10H3z" fill="#4e8a6a" />
            <rect x="3" y="21" width="24" height="4" fill="#7a9db0" />
          </T>
        </Frame>
      </Slot>

      <div className="ml-auto flex items-center">
        <Tri dir="up" size={3} color="#fff" />
        <div className="ml-[12px]">
          <Ic size={16} vb={16}>
            <rect width="16" height="16" fill="#f0a35a" />
            <circle cx="7" cy="7" r="5.500" fill="none" stroke="#7a4a1a" />
            <path d="M1.500 7h11M7 1.500v11" stroke="#7a4a1a" />
            <circle cx="11.500" cy="11.500" r="4" fill="#d8331f" />
            <rect x="11" y="9" width="1.200" height="3" fill="#fff" />
            <rect x="11" y="12.800" width="1.200" height="1.200" fill="#fff" />
          </Ic>
        </div>
        <div className="ml-[9px]">
          <Ic size={16} vb={16}>
            <rect x="1" y="0" width="1.500" height="16" fill="#fff" />
            <path d="M2.500 1h7l-1.500 3 1.500 3h-7z" fill="#fff" />
            <polygon points="11,6 16,15 6,15" fill="#f4cc22" />
            <rect x="10.400" y="9" width="1.200" height="3.500" fill="#222" />
            <rect x="10.400" y="13" width="1.200" height="1.200" fill="#222" />
          </Ic>
        </div>
        <div className="ml-[11px]">
          <Ic size={16} vb={16}>
            <rect x="6" y="0" width="4" height="2" fill="#fff" />
            <rect x="3.700" y="1.700" width="8.600" height="13.600" rx="1" fill="none" stroke="#fff" strokeWidth="1.400" />
            <rect x="5.500" y="6" width="5" height="8" fill="#fff" />
          </Ic>
        </div>
        <div className="ml-[4px]">
          <Ic size={16} vb={16}>
            <rect x="1" y="13" width="2" height="2" fill="#fff" />
            <rect x="4" y="11" width="2" height="4" fill="#fff" />
            <rect x="7" y="8" width="2" height="7" fill="#fff" />
            <rect x="10" y="5" width="2" height="10" fill="#fff" />
            <rect x="13" y="1" width="2" height="14" fill="#fff" />
          </Ic>
        </div>
        <div className="ml-[11px]">
          <Ic size={16} vb={16}>
            <path d="M1 5h3l4-4v14l-4-4H1z" fill="#fff" />
            <path d="M11 5c1.500 2 1.500 4 0 6" fill="none" stroke="#8a9ab0" strokeWidth="1.200" />
          </Ic>
        </div>
        <div className="ml-[10px] mr-[14px] flex w-[60px] flex-col items-center pt-[2px] text-[11.500px] leading-[17px] text-[#e8ecf2]">
          <span>9:32 PM</span>
          <span>5/28/2015</span>
        </div>
      </div>
    </div>
  );
}

export default function App() {
  return (
    <div className="flex h-[900px] w-[1600px] flex-col overflow-hidden bg-[#b8b8b8]" style={{ fontFamily: '"Liberation Sans", Arial, sans-serif' }}>
      {/* window title */}
      <div className="relative flex h-[23px] shrink-0 items-center justify-center border-b border-[#2f5a9c] bg-[#3a6ab5]">
        <div className="absolute left-[3px] top-[4px]"><AxureLogo size={15} /></div>
        <span className="pt-[1px] text-[14px] text-[#253348]" style={{ fontFamily: '"Open Sans", sans-serif' }}>
          Student Pulse Achievements Page - Axure RP Pro 7.0 : Unlicensed
        </span>
        <div className="absolute right-0 top-0 flex h-[19px] items-start">
          <div className="mr-[16px] mt-[10px] h-[2px] w-[8px] bg-[#1b2a40]" />
          <div className="relative mr-[12px] mt-[4px] h-[11px] w-[11px]">
            <div className="absolute right-0 top-0 h-[7px] w-[7px] border border-[#1b2a40]" />
            <div className="absolute bottom-0 left-0 h-[7px] w-[8px] border border-[#1b2a40] bg-[#3a6ab5]" />
          </div>
          <div className="flex h-[19px] w-[45px] items-center justify-center bg-[#c75050]">
            <X size={13} strokeWidth={3} color="#fff" />
          </div>
        </div>
      </div>

      {/* menu */}
      <div className="flex h-[22px] shrink-0 items-center gap-[11.500px] pl-[6px] text-[11.500px] text-[#1c1c1c]" style={{ fontFamily: '"Open Sans", sans-serif' }}>
        {['File', 'Edit', 'View', 'Project', 'Arrange', 'Publish', 'Team (PRO)', 'Help'].map((m) => (
          <span key={m}>{m}</span>
        ))}
      </div>

      <ToolRow1 />
      <ToolRow2 />

      <div className="mt-[2px] flex h-[758px] shrink-0">
        <WidgetPanel />
        <Splitter />
        <CanvasArea />
      </div>

      <Taskbar />
    </div>
  );
}
